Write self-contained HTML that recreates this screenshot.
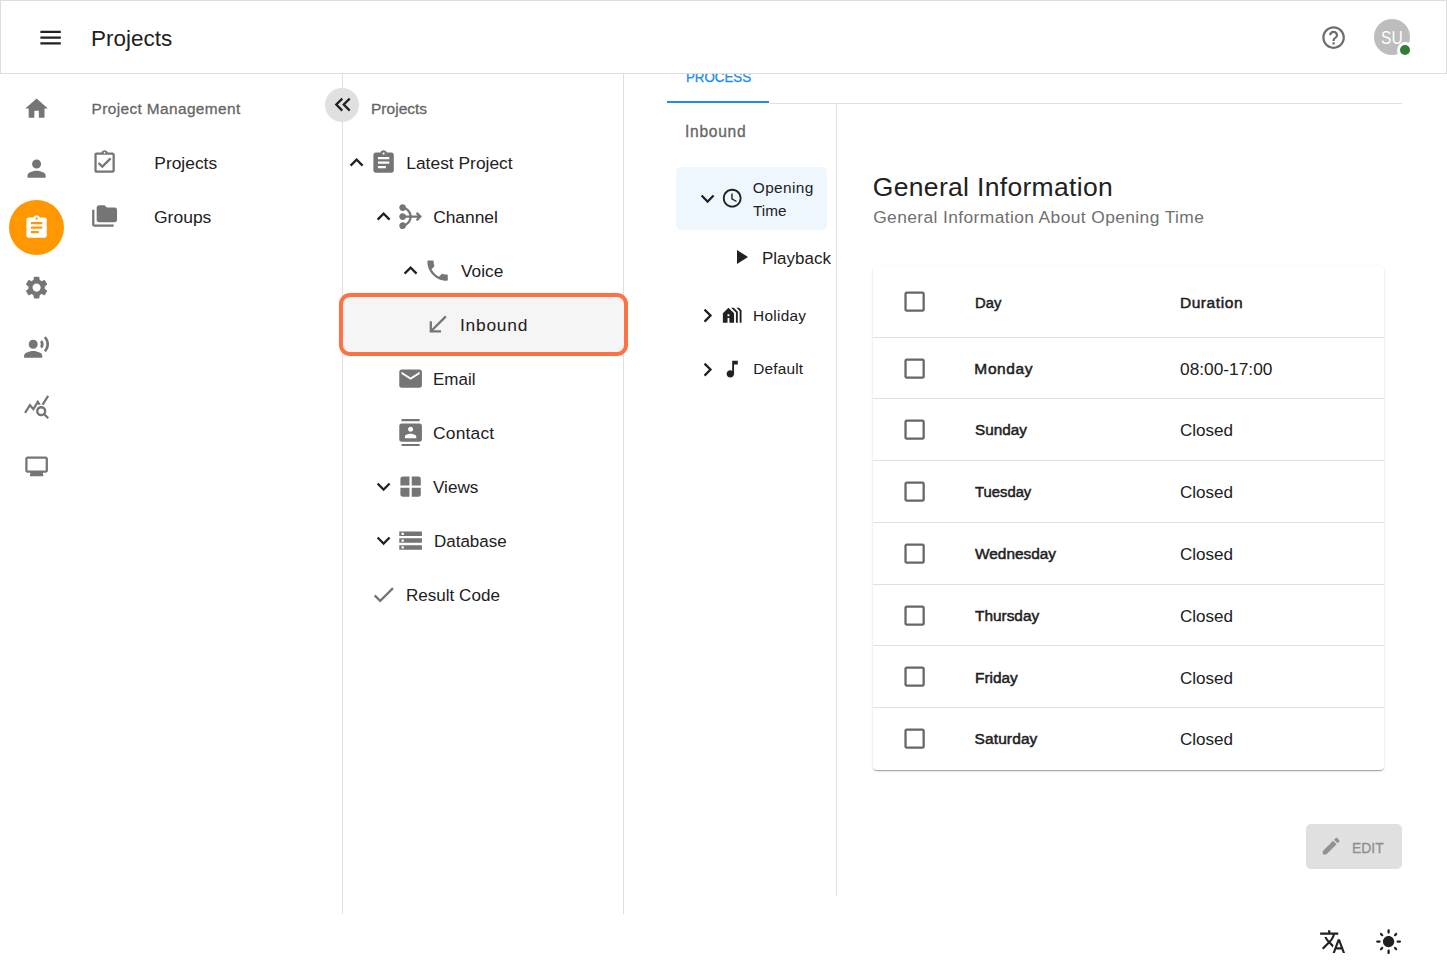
<!DOCTYPE html><html lang="en"><head><meta charset="utf-8"><title>Projects</title><style>
*{box-sizing:border-box;margin:0;padding:0}
html,body{width:1447px;height:970px;overflow:hidden;background:#fff}
body{position:relative;font-family:"Liberation Sans",sans-serif;color:#212121}
.a{position:absolute}
.t{position:absolute;white-space:nowrap;line-height:1;transform-origin:0 0}
.sb{-webkit-text-stroke:0.3px currentColor}
.sb2{-webkit-text-stroke:0.5px currentColor}
svg{position:absolute;display:block;z-index:4}
.t{z-index:4}
.hl{position:absolute;background:#e0e0e0}
</style></head><body>
<div class="a" style="left:9px;top:200px;width:55px;height:55px;border-radius:50%;background:#ff9800"></div>
<div class="hl" style="left:342px;top:74px;width:1px;height:840px"></div>
<div class="hl" style="left:623px;top:74px;width:1px;height:840px"></div>
<div class="hl" style="left:836px;top:104px;width:1px;height:792px"></div>
<div class="a" style="left:325px;top:88px;width:34px;height:34px;border-radius:50%;background:#e0e0e0"></div>
<div class="a" style="left:339px;top:293px;width:289px;height:63px;border:4px solid #ff7043;border-radius:11px;background:#f5f5f5"></div>
<div class="a" style="left:769px;top:103px;width:633px;height:1px;background:#e0e0e0"></div>
<div class="a" style="left:667px;top:101px;width:102px;height:2px;background:#1a8df1"></div>
<div class="a" style="left:676px;top:167px;width:151px;height:63px;border-radius:5px;background:#eef6fe"></div>
<div class="a" style="left:873px;top:266px;width:511px;height:504px;border-radius:4px;background:#fff;box-shadow:0 2px 1px -1px rgba(0,0,0,.2),0 1px 1px 0 rgba(0,0,0,.14),0 1px 3px 0 rgba(0,0,0,.12)"></div>
<div class="a" style="left:873px;top:337px;width:511px;height:1px;background:#e0e0e0"></div>
<div class="a" style="left:873px;top:398px;width:511px;height:1px;background:#e0e0e0"></div>
<div class="a" style="left:873px;top:460px;width:511px;height:1px;background:#e0e0e0"></div>
<div class="a" style="left:873px;top:522px;width:511px;height:1px;background:#e0e0e0"></div>
<div class="a" style="left:873px;top:584px;width:511px;height:1px;background:#e0e0e0"></div>
<div class="a" style="left:873px;top:645px;width:511px;height:1px;background:#e0e0e0"></div>
<div class="a" style="left:873px;top:707px;width:511px;height:1px;background:#e0e0e0"></div>
<div class="a" style="left:1306px;top:824px;width:96px;height:45px;border-radius:5px;background:#e0e0e0"></div>
<div class="a" style="left:0;top:0;width:1447px;height:74px;border:1px solid #ddd;background:#fff;z-index:2"></div>
<div class="a" style="left:1374px;top:19px;width:36px;height:36px;border-radius:50%;background:#bdbdbd;z-index:3"></div>
<div class="a" style="left:1396.5px;top:41.5px;width:17px;height:17px;border-radius:50%;background:#fff;z-index:5"></div>
<div class="a" style="left:1400px;top:45px;width:10px;height:10px;border-radius:50%;background:#2e7d32;z-index:5"></div>
<svg viewBox="0 0 24 24" style="left:36.90px;top:24.20px;width:27.20px;height:27.20px;fill:#212121"><path d="M3 18h18v-2H3v2zm0-5h18v-2H3v2zm0-7v2h18V6H3z"/></svg>
<svg viewBox="0 0 24 24" style="left:1320.00px;top:23.70px;width:27.20px;height:27.20px;fill:#6e6e6e"><path d="M11 18h2v-2h-2v2zm1-16C6.480 2 2 6.480 2 12s4.480 10 10 10 10-4.480 10-10S17.520 2 12 2zm0 18c-4.410 0-8-3.590-8-8s3.590-8 8-8 8 3.590 8 8-3.590 8-8 8zm0-14c-2.210 0-4 1.790-4 4h2c0-1.100.9-2 2-2s2 .9 2 2c0 2-3 1.750-3 5h2c0-2.250 3-2.500 3-5 0-2.210-1.790-4-4-4z"/></svg>
<svg viewBox="0 0 24 24" style="left:22.70px;top:94.60px;width:27.20px;height:27.20px;fill:#757575"><path d="M10 20v-6h4v6h5v-8h3L12 3 2 12h3v8z"/></svg>
<svg viewBox="0 0 24 24" style="left:22.70px;top:154.80px;width:27.20px;height:27.20px;fill:#757575"><path d="M12 12c2.21 0 4-1.79 4-4s-1.79-4-4-4-4 1.79-4 4 1.79 4 4 4zm0 2c-2.67 0-8 1.34-8 4v2h16v-2c0-2.66-5.33-4-8-4z"/></svg>
<svg viewBox="0 0 24 24" style="left:22.70px;top:214.00px;width:27.20px;height:27.20px;fill:#fff"><path d="M19 3h-4.18C14.4 1.84 13.3 1 12 1c-1.3 0-2.4.84-2.82 2H5c-1.1 0-2 .9-2 2v14c0 1.1.9 2 2 2h14c1.1 0 2-.9 2-2V5c0-1.1-.9-2-2-2zm-7 0c.55 0 1 .45 1 1s-.45 1-1 1-1-.45-1-1 .45-1 1-1zm2 14H7v-2h7v2zm3-4H7v-2h10v2zm0-4H7V7h10v2z"/></svg>
<svg viewBox="0 0 24 24" style="left:22.70px;top:273.70px;width:27.20px;height:27.20px;fill:#757575"><path d="M19.14 12.94c.04-.3.06-.61.06-.94 0-.32-.02-.64-.07-.94l2.03-1.58c.18-.14.23-.41.12-.61l-1.92-3.32c-.12-.22-.37-.29-.59-.22l-2.39.96c-.5-.38-1.03-.7-1.62-.94l-.36-2.54c-.04-.24-.24-.41-.48-.41h-3.84c-.24 0-.43.17-.47.41l-.36 2.54c-.59.24-1.13.57-1.62.94l-2.39-.96c-.22-.08-.47 0-.59.22L2.74 8.87c-.12.21-.08.47.12.61l2.03 1.58c-.05.3-.09.63-.09.94s.02.64.07.94l-2.03 1.58c-.18.14-.23.41-.12.61l1.92 3.32c.12.22.37.29.59.22l2.39-.96c.5.38 1.03.7 1.62.94l.36 2.54c.05.24.24.41.48.41h3.84c.24 0 .44-.17.47-.41l.36-2.54c.59-.24 1.13-.56 1.62-.94l2.39.96c.22.08.47 0 .59-.22l1.92-3.32c.12-.22.07-.47-.12-.61l-2.01-1.58zM12 15.6c-1.98 0-3.600-1.62-3.600-3.600s1.620-3.600 3.600-3.600 3.600 1.620 3.600 3.600-1.620 3.600-3.600 3.600z"/></svg>
<svg viewBox="0 0 24 24" style="left:22.70px;top:334.30px;width:27.20px;height:27.20px;fill:#757575"><path d="M13 9a4 4 0 1 1-8 0a4 4 0 1 1 8 0z M9 15c-2.67 0-8 1.340-8 4v2h16v-2c0-2.660-5.330-4-8-4zm7.760-9.640l-1.680 1.690c.84 1.180.84 2.710 0 3.890l1.680 1.690c2.020-2.020 2.020-5.070 0-7.270zM20.070 2l-1.630 1.630c2.770 3.020 2.770 7.560 0 10.740L20.070 16c3.900-3.890 3.910-9.950 0-14z"/></svg>
<svg viewBox="0 0 24 24" style="left:22.70px;top:393.10px;width:27.20px;height:27.20px;fill:#757575"><path d="M19.88 18.47c.44-.7.7-1.51.7-2.39 0-2.49-2.01-4.5-4.5-4.5s-4.5 2.01-4.5 4.5 2.01 4.5 4.49 4.5c.88 0 1.7-.26 2.39-.7L21.58 23 23 21.580l-3.120-3.110zm-3.800.11c-1.380 0-2.500-1.120-2.500-2.500s1.120-2.500 2.500-2.500 2.500 1.120 2.500 2.500-1.120 2.500-2.500 2.500zm-.36-8.500c-.74.020-1.450.18-2.100.45l-.55-.83-3.800 6.180-3.010-3.520-3.630 5.810L1 17l5-8 3 3.500L13 6l2.720 4.080zm2.590.5c-.64-.28-1.330-.45-2.050-.49L21.380 2 23 3.180l-4.690 7.400z"/></svg>
<svg viewBox="0 0 24 24" style="left:22.70px;top:452.80px;width:27.20px;height:27.20px;fill:#757575"><path d="M20 3H4c-1.100 0-2 .9-2 2v10.500c0 1.100.9 2 2 2h16c1.100 0 2-.9 2-2V5c0-1.100-.9-2-2-2zm0 12.500H4V5h16v10.500z M6.500 17.500h11l.5 3H6z"/></svg>
<svg viewBox="0 0 24 24" style="left:90.75px;top:148.60px;width:27.20px;height:27.20px;fill:#757575"><path d="M18 9l-1.410-1.420L10 14.170l-2.590-2.580L6 13l4 4zm1-6h-4.180C14.400 1.840 13.300 1 12 1c-1.300 0-2.400.84-2.820 2H5c-.14 0-.27.010-.4.040-.39.080-.74.28-1.010.55-.18.18-.33.4-.43.64-.1.23-.16.49-.16.770v14c0 .27.060.54.16.78s.25.45.43.64c.27.27.62.47 1.010.55.13.020.26.030.4.030h14c1.100 0 2-.9 2-2V5c0-1.100-.9-2-2-2zm-7-.25c.41 0 .75.34.75.75s-.34.75-.75.75-.75-.34-.75-.75.34-.75.75-.75zM19 19H5V5h14v14z"/></svg>
<svg viewBox="0 0 24 24" style="left:91.10px;top:202.90px;width:27.20px;height:27.20px;fill:#757575"><path d="M3 6H1v13c0 1.100.9 2 2 2h17v-2H3V6z M21 4h-7l-2-2H7c-1.100 0-1.990.9-1.990 2L5 15c0 1.100.9 2 2 2h14c1.100 0 2-.9 2-2V6c0-1.100-.9-2-2-2z"/></svg>
<svg viewBox="0 0 24 24" style="left:329.20px;top:90.90px;width:27.20px;height:27.20px;fill:#212121"><path d="M17.59 18L19 16.590 14.420 12 19 7.410 17.590 6l-6 6z M11 18l1.410-1.410L7.830 12l4.580-4.590L11 6l-6 6z"/></svg>
<svg viewBox="0 0 24 24" style="left:342.90px;top:148.70px;width:27.20px;height:27.20px;fill:#212121"><path d="M12 8l-6 6 1.410 1.410L12 10.830l4.590 4.580L18 14z"/></svg>
<svg viewBox="0 0 24 24" style="left:369.90px;top:148.70px;width:27.20px;height:27.20px;fill:#757575"><path d="M19 3h-4.18C14.4 1.84 13.3 1 12 1c-1.3 0-2.4.84-2.82 2H5c-1.1 0-2 .9-2 2v14c0 1.1.9 2 2 2h14c1.1 0 2-.9 2-2V5c0-1.1-.9-2-2-2zm-7 0c.55 0 1 .45 1 1s-.45 1-1 1-1-.45-1-1 .45-1 1-1zm2 14H7v-2h7v2zm3-4H7v-2h10v2zm0-4H7V7h10v2z"/></svg>
<svg viewBox="0 0 24 24" style="left:369.90px;top:202.70px;width:27.20px;height:27.20px;fill:#212121"><path d="M12 8l-6 6 1.410 1.410L12 10.830l4.590 4.580L18 14z"/></svg>
<svg viewBox="0 0 24 24" style="left:396.90px;top:202.70px;width:27.20px;height:27.20px;fill:#757575"><path d="M22 12l-4 4-1.410-1.410L18.170 13h-5.230c-.34 3.100-2.260 5.720-4.940 7.050C7.960 21.690 6.640 23 5 23c-1.660 0-3-1.340-3-3s1.340-3 3-3c.95 0 1.780.45 2.330 1.140 1.900-1.030 3.260-2.910 3.580-5.140h-3.100C7.400 14.160 6.300 15 5 15c-1.660 0-3-1.340-3-3s1.340-3 3-3c1.300 0 2.400.84 2.820 2h3.100c-.32-2.230-1.690-4.100-3.590-5.140C6.780 6.550 5.950 7 5 7 3.340 7 2 5.660 2 4s1.340-3 3-3c1.640 0 2.960 1.310 2.990 2.950 2.680 1.330 4.600 3.950 4.940 7.050h5.230l-1.590-1.590L18 8l4 4z"/></svg>
<svg viewBox="0 0 24 24" style="left:396.90px;top:256.70px;width:27.20px;height:27.20px;fill:#212121"><path d="M12 8l-6 6 1.410 1.410L12 10.830l4.590 4.580L18 14z"/></svg>
<svg viewBox="0 0 24 24" style="left:423.90px;top:256.70px;width:27.20px;height:27.20px;fill:#757575"><path d="M6.620 10.790c1.440 2.830 3.760 5.140 6.590 6.590l2.200-2.200c.27-.27.67-.36 1.020-.24 1.120.37 2.330.57 3.570.57.55 0 1 .45 1 1V20c0 .55-.45 1-1 1-9.390 0-17-7.610-17-17 0-.55.45-1 1-1h3.500c.55 0 1 .45 1 1 0 1.250.2 2.450.57 3.570.11.35.030.74-.25 1.020l-2.200 2.200z"/></svg>
<svg viewBox="0 0 24 24" style="left:423.90px;top:310.70px;width:27.20px;height:27.20px;fill:#757575"><path d="M20 5.410L18.590 4 7 15.590V9H5v10h10v-2H8.410z"/></svg>
<svg viewBox="0 0 24 24" style="left:396.90px;top:364.70px;width:27.20px;height:27.20px;fill:#757575"><path d="M20 4H4c-1.100 0-1.990.9-1.990 2L2 18c0 1.100.9 2 2 2h16c1.100 0 2-.9 2-2V6c0-1.100-.9-2-2-2zm0 4l-8 5-8-5V6l8 5 8-5v2z"/></svg>
<svg viewBox="0 0 24 24" style="left:396.90px;top:418.70px;width:27.20px;height:27.20px;fill:#757575"><path d="M20 0H4v2h16V0zM4 24h16v-2H4v2zM20 4H4c-1.100 0-2 .9-2 2v12c0 1.100.9 2 2 2h16c1.100 0 2-.9 2-2V6c0-1.100-.9-2-2-2zm-8 2.750c1.240 0 2.250 1.010 2.250 2.250s-1.010 2.250-2.250 2.250S9.750 10.240 9.750 9 10.760 6.750 12 6.750zM17 17H7v-1.500c0-1.670 3.330-2.500 5-2.500s5 .83 5 2.500V17z"/></svg>
<svg viewBox="0 0 24 24" style="left:369.90px;top:472.70px;width:27.20px;height:27.20px;fill:#212121"><path d="M16.590 8.590L12 13.170 7.410 8.590 6 10l6 6 6-6z"/></svg>
<svg viewBox="0 0 24 24" style="left:396.90px;top:472.70px;width:27.20px;height:27.20px;fill:#757575"><path d="M5 3h6v8H3V5c0-1.100.9-2 2-2z M13 3h6c1.100 0 2 .9 2 2v6h-8V3z M3 13h8v8H5c-1.100 0-2-.9-2-2v-6z M13 13h8v6c0 1.100-.9 2-2 2h-6v-8z"/></svg>
<svg viewBox="0 0 24 24" style="left:369.90px;top:526.70px;width:27.20px;height:27.20px;fill:#212121"><path d="M16.590 8.590L12 13.170 7.410 8.590 6 10l6 6 6-6z"/></svg>
<svg viewBox="0 0 24 24" style="left:396.90px;top:526.70px;width:27.20px;height:27.20px;fill:#757575"><path d="M2 20h20v-4H2v4zm2-3h2v2H4v-2zM2 4v4h20V4H2zm4 3H4V5h2v2zm-4 7h20v-4H2v4zm2-3h2v2H4v-2z"/></svg>
<svg viewBox="0 0 24 24" style="left:369.90px;top:580.70px;width:27.20px;height:27.20px;fill:#757575"><path d="M9 16.170L4.830 12l-1.420 1.410L9 19 21 7l-1.410-1.410z"/></svg>
<svg viewBox="0 0 24 24" style="left:693.90px;top:184.70px;width:27.20px;height:27.20px;fill:#212121"><path d="M16.590 8.590L12 13.170 7.410 8.590 6 10l6 6 6-6z"/></svg>
<svg viewBox="0 0 24 24" style="left:721.20px;top:187.20px;width:22.40px;height:22.40px;fill:#212121"><path d="M11.990 2C6.470 2 2 6.480 2 12s4.470 10 9.990 10C17.520 22 22 17.520 22 12S17.520 2 11.990 2zM12 20c-4.420 0-8-3.580-8-8s3.580-8 8-8 8 3.580 8 8-3.580 8-8 8zm.5-13H11v6l5.250 3.150.75-1.230-4.500-2.670z"/></svg>
<svg viewBox="0 0 24 24" style="left:729.15px;top:245.30px;width:24.00px;height:24.00px;fill:#212121"><path d="M8 5v14l11-7z"/></svg>
<svg viewBox="0 0 24 24" style="left:694.00px;top:301.90px;width:27.20px;height:27.20px;fill:#212121"><path d="M10 6L8.590 7.410 13.170 12l-4.580 4.590L10 18l6-6z"/></svg>
<svg viewBox="0 0 24 24" style="left:721.20px;top:304.30px;width:22.40px;height:22.40px;fill:#212121"><path d="M18 20V8.350L13.650 4h-2.830L16 9.180V20h2zm4 0V6.690L19.310 4h-2.830L20 7.520V20h2zM8 4l-6 6v10h5v-5h2v5h5V10L8 4zm1 9H7v-2h2v2z"/></svg>
<svg viewBox="0 0 24 24" style="left:694.00px;top:356.20px;width:27.20px;height:27.20px;fill:#212121"><path d="M10 6L8.590 7.410 13.170 12l-4.580 4.590L10 18l6-6z"/></svg>
<svg viewBox="0 0 24 24" style="left:720.95px;top:358.00px;width:22.40px;height:22.40px;fill:#212121"><path d="M12 3v10.550c-.59-.34-1.270-.55-2-.55-2.210 0-4 1.790-4 4s1.790 4 4 4 4-1.790 4-4V7h4V3h-6z"/></svg>
<svg viewBox="0 0 24 24" style="left:900.70px;top:287.70px;width:27.20px;height:27.20px;fill:#666"><path d="M19 5v14H5V5h14m0-2H5c-1.100 0-2 .9-2 2v14c0 1.100.9 2 2 2h14c1.100 0 2-.9 2-2V5c0-1.100-.9-2-2-2z"/></svg>
<svg viewBox="0 0 24 24" style="left:900.70px;top:354.60px;width:27.20px;height:27.20px;fill:#666"><path d="M19 5v14H5V5h14m0-2H5c-1.100 0-2 .9-2 2v14c0 1.100.9 2 2 2h14c1.100 0 2-.9 2-2V5c0-1.100-.9-2-2-2z"/></svg>
<svg viewBox="0 0 24 24" style="left:900.70px;top:416.10px;width:27.20px;height:27.20px;fill:#666"><path d="M19 5v14H5V5h14m0-2H5c-1.100 0-2 .9-2 2v14c0 1.100.9 2 2 2h14c1.100 0 2-.9 2-2V5c0-1.100-.9-2-2-2z"/></svg>
<svg viewBox="0 0 24 24" style="left:900.70px;top:477.90px;width:27.20px;height:27.20px;fill:#666"><path d="M19 5v14H5V5h14m0-2H5c-1.100 0-2 .9-2 2v14c0 1.100.9 2 2 2h14c1.100 0 2-.9 2-2V5c0-1.100-.9-2-2-2z"/></svg>
<svg viewBox="0 0 24 24" style="left:900.70px;top:539.90px;width:27.20px;height:27.20px;fill:#666"><path d="M19 5v14H5V5h14m0-2H5c-1.100 0-2 .9-2 2v14c0 1.100.9 2 2 2h14c1.100 0 2-.9 2-2V5c0-1.100-.9-2-2-2z"/></svg>
<svg viewBox="0 0 24 24" style="left:900.70px;top:601.60px;width:27.20px;height:27.20px;fill:#666"><path d="M19 5v14H5V5h14m0-2H5c-1.100 0-2 .9-2 2v14c0 1.100.9 2 2 2h14c1.100 0 2-.9 2-2V5c0-1.100-.9-2-2-2z"/></svg>
<svg viewBox="0 0 24 24" style="left:900.70px;top:663.10px;width:27.20px;height:27.20px;fill:#666"><path d="M19 5v14H5V5h14m0-2H5c-1.100 0-2 .9-2 2v14c0 1.100.9 2 2 2h14c1.100 0 2-.9 2-2V5c0-1.100-.9-2-2-2z"/></svg>
<svg viewBox="0 0 24 24" style="left:900.70px;top:724.90px;width:27.20px;height:27.20px;fill:#666"><path d="M19 5v14H5V5h14m0-2H5c-1.100 0-2 .9-2 2v14c0 1.100.9 2 2 2h14c1.100 0 2-.9 2-2V5c0-1.100-.9-2-2-2z"/></svg>
<svg viewBox="0 0 24 24" style="left:1320.00px;top:835.20px;width:22.40px;height:22.40px;fill:#929292"><path d="M3 17.250V21h3.750L17.810 9.940l-3.750-3.750L3 17.250zM20.710 7.040c.39-.39.39-1.020 0-1.410l-2.340-2.340c-.39-.39-1.020-.39-1.410 0l-1.830 1.830 3.750 3.750 1.830-1.830z"/></svg>
<svg viewBox="0 0 24 24" style="left:1318.90px;top:928.20px;width:27.20px;height:27.20px;fill:#212121"><path d="M12.870 15.070l-2.540-2.510.03-.03c1.740-1.940 2.980-4.170 3.710-6.530H17V4h-7V2H8v2H1v1.990h11.170C11.500 7.920 10.440 9.750 9 11.350 8.070 10.320 7.300 9.190 6.690 8h-2c.73 1.630 1.730 3.170 2.980 4.560l-5.090 5.020L4 19l5-5 3.110 3.110.76-2.040zM18.500 10h-2L12 22h2l1.120-3h4.750L21 22h2l-4.500-12zm-2.620 7l1.620-4.330L19.120 17h-3.240z"/></svg>
<svg viewBox="0 0 24 24" style="left:1375.10px;top:927.70px;width:27.20px;height:27.20px;fill:#212121"><path d="M12 7c-2.760 0-5 2.240-5 5s2.240 5 5 5 5-2.240 5-5-2.240-5-5-5zM2 13h2c.55 0 1-.45 1-1s-.45-1-1-1H2c-.55 0-1 .45-1 1s.45 1 1 1zm18 0h2c.55 0 1-.45 1-1s-.45-1-1-1h-2c-.55 0-1 .45-1 1s.45 1 1 1zM11 2v2c0 .55.45 1 1 1s1-.45 1-1V2c0-.55-.45-1-1-1s-1 .45-1 1zm0 18v2c0 .55.45 1 1 1s1-.45 1-1v-2c0-.55-.45-1-1-1s-1 .45-1 1zM5.990 4.580c-.39-.39-1.030-.39-1.410 0-.39.39-.39 1.030 0 1.410l1.060 1.060c.39.39 1.030.39 1.410 0s.39-1.030 0-1.410L5.990 4.580zm12.370 12.370c-.39-.39-1.030-.39-1.410 0-.39.39-.39 1.030 0 1.410l1.060 1.060c.39.39 1.030.39 1.410 0 .39-.39.39-1.030 0-1.410l-1.060-1.060zm1.060-10.960c.39-.39.39-1.030 0-1.410-.39-.39-1.030-.39-1.410 0l-1.060 1.060c-.39.39-.39 1.030 0 1.410s1.030.39 1.410 0l1.060-1.060zM7.050 18.360c.39-.39.39-1.030 0-1.410-.39-.39-1.030-.39-1.410 0l-1.060 1.060c-.39.39-.39 1.030 0 1.410s1.030.39 1.410 0l1.060-1.060z"/></svg>
<div class="t" style="left:90.85px;top:28.00px;font-size:22.50px;color:#212121;transform:scaleX(0.9982);">Projects</div>
<div class="t" style="left:1380.95px;top:28.00px;font-size:19.00px;color:#fff;transform:scaleX(0.8190);">SU</div>
<div class="t sb" style="left:91.54px;top:101.00px;font-size:15.40px;color:#666;letter-spacing:0.392px;">Project Management</div>
<div class="t" style="left:154.30px;top:154.80px;font-size:17.40px;color:#212121;">Projects</div>
<div class="t" style="left:154.19px;top:208.90px;font-size:17.40px;color:#212121;transform:scaleX(1.0057);">Groups</div>
<div class="t sb" style="left:370.63px;top:100.70px;font-size:15.40px;color:#666;transform:scaleX(1.0094);">Projects</div>
<div class="t" style="left:406.29px;top:154.90px;font-size:17.40px;color:#212121;">Latest Project</div>
<div class="t" style="left:433.13px;top:208.90px;font-size:17.40px;color:#212121;">Channel</div>
<div class="t" style="left:460.80px;top:262.90px;font-size:17.40px;color:#212121;transform:scaleX(0.9927);">Voice</div>
<div class="t" style="left:460.04px;top:316.90px;font-size:17.40px;color:#212121;letter-spacing:0.739px;">Inbound</div>
<div class="t" style="left:433.22px;top:370.90px;font-size:17.40px;color:#212121;transform:scaleX(0.9770);">Email</div>
<div class="t" style="left:433.09px;top:424.90px;font-size:17.40px;color:#212121;letter-spacing:0.179px;">Contact</div>
<div class="t" style="left:433.22px;top:478.90px;font-size:17.40px;color:#212121;transform:scaleX(0.9857);">Views</div>
<div class="t" style="left:433.90px;top:532.90px;font-size:17.40px;color:#212121;transform:scaleX(0.9762);">Database</div>
<div class="t" style="left:406.10px;top:586.90px;font-size:17.40px;color:#212121;transform:scaleX(0.9808);">Result Code</div>
<div class="t" style="left:686.25px;top:70.00px;font-size:14.00px;color:#1a8cf0;transform:scaleX(0.9497);z-index:1;-webkit-text-stroke:0.3px #1a8cf0;">PROCESS</div>
<div class="t sb" style="left:684.99px;top:123.90px;font-size:15.60px;color:#666;letter-spacing:0.708px;">Inbound</div>
<div class="t" style="left:752.82px;top:180.20px;font-size:15.40px;color:#212121;letter-spacing:0.378px;">Opening</div>
<div class="t" style="left:753.08px;top:202.80px;font-size:15.40px;color:#212121;transform:scaleX(0.9934);">Time</div>
<div class="t" style="left:761.90px;top:249.90px;font-size:17.40px;color:#212121;transform:scaleX(0.9766);">Playback</div>
<div class="t" style="left:753.04px;top:308.00px;font-size:15.40px;color:#212121;letter-spacing:0.271px;">Holiday</div>
<div class="t" style="left:753.26px;top:361.40px;font-size:15.40px;color:#212121;letter-spacing:0.166px;">Default</div>
<div class="t" style="left:872.82px;top:173.90px;font-size:26.50px;color:#212121;letter-spacing:0.319px;">General Information</div>
<div class="t" style="left:873.19px;top:209.00px;font-size:17.40px;color:#707070;letter-spacing:0.392px;">General Information About Opening Time</div>
<div class="t sb2" style="left:975.08px;top:295.00px;font-size:15.50px;color:#212121;transform:scaleX(0.9543);">Day</div>
<div class="t sb2" style="left:1179.90px;top:295.00px;font-size:15.50px;color:#212121;letter-spacing:0.578px;">Duration</div>
<div class="t sb2" style="left:974.37px;top:361.00px;font-size:15.50px;color:#212121;letter-spacing:0.611px;">Monday</div>
<div class="t" style="left:1179.63px;top:361.00px;font-size:17.40px;color:#212121;transform:scaleX(0.9957);">08:00-17:00</div>
<div class="t sb2" style="left:974.65px;top:422.00px;font-size:15.50px;color:#212121;transform:scaleX(0.9873);">Sunday</div>
<div class="t" style="left:1180.07px;top:422.00px;font-size:17.40px;color:#212121;transform:scaleX(0.9801);">Closed</div>
<div class="t sb2" style="left:975.07px;top:484.00px;font-size:15.50px;color:#212121;transform:scaleX(0.9558);">Tuesday</div>
<div class="t" style="left:1180.07px;top:484.00px;font-size:17.40px;color:#212121;transform:scaleX(0.9801);">Closed</div>
<div class="t sb2" style="left:975.16px;top:546.00px;font-size:15.50px;color:#212121;transform:scaleX(0.9935);">Wednesday</div>
<div class="t" style="left:1180.07px;top:546.00px;font-size:17.40px;color:#212121;transform:scaleX(0.9801);">Closed</div>
<div class="t sb2" style="left:975.30px;top:608.00px;font-size:15.50px;color:#212121;transform:scaleX(0.9931);">Thursday</div>
<div class="t" style="left:1180.07px;top:608.00px;font-size:17.40px;color:#212121;transform:scaleX(0.9801);">Closed</div>
<div class="t sb2" style="left:975.40px;top:670.00px;font-size:15.50px;color:#212121;transform:scaleX(0.9935);">Friday</div>
<div class="t" style="left:1180.07px;top:670.00px;font-size:17.40px;color:#212121;transform:scaleX(0.9801);">Closed</div>
<div class="t sb2" style="left:974.53px;top:731.00px;font-size:15.50px;color:#212121;letter-spacing:0.116px;">Saturday</div>
<div class="t" style="left:1180.07px;top:731.00px;font-size:17.40px;color:#212121;transform:scaleX(0.9801);">Closed</div>
<div class="t sb" style="left:1351.81px;top:840.00px;font-size:15.50px;color:#8e8e8e;transform:scaleX(0.8957);">EDIT</div>

</body></html>
